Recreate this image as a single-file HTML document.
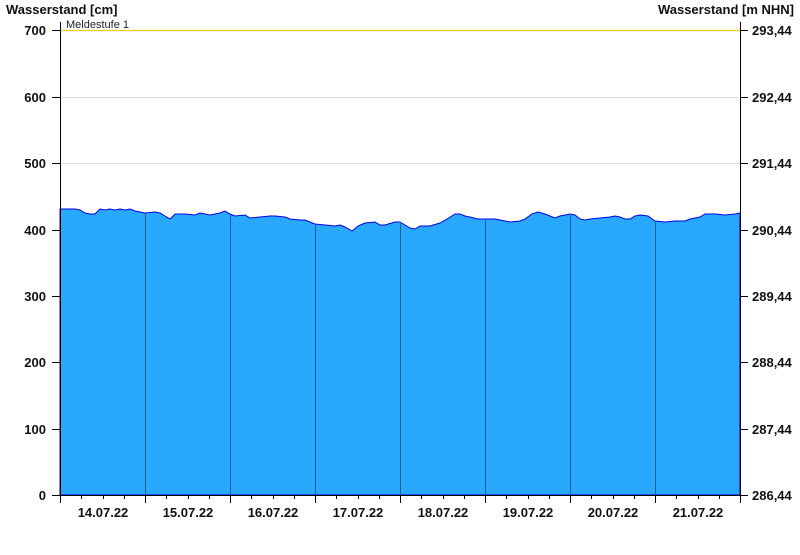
<!DOCTYPE html>
<html><head><meta charset="utf-8"><style>
body{margin:0;background:#fff;width:800px;height:550px;overflow:hidden}
svg text{font-family:"Liberation Sans",Arial,sans-serif}
</style></head><body>
<svg width="800" height="550" xmlns="http://www.w3.org/2000/svg">
<g font-weight="bold" font-size="13" fill="#111">
<text x="6" y="14">Wasserstand [cm]</text>
<text x="794" y="14" text-anchor="end">Wasserstand [m NHN]</text>
</g>
<g stroke="#ddd" stroke-width="1">
<line x1="60" y1="97.5" x2="740" y2="97.5"/>
<line x1="60" y1="163.5" x2="740" y2="163.5"/>
</g>
<line x1="60" y1="30.5" x2="740" y2="30.5" stroke="#f5c518" stroke-width="1.2"/>
<text x="66" y="28" font-size="11" fill="#222">Meldestufe 1</text>
<path fill="#29a8ff" stroke="#0000e0" stroke-width="1" d="M60,209 L75,209 L80,210 L85,213 L90,214 L95,214 L100,209 L105,210 L110,209 L115,210 L120,209 L125,210 L130,209 L135,211 L145,213 L155,212 L160,213 L165,216 L170,219 L175,214 L185,214 L195,215 L200,213 L210,215 L215,214 L220,213 L225,211 L230,214 L235,216 L245,215 L250,218 L260,217 L270,216 L275,216 L285,217 L290,219 L300,220 L305,220 L315,224 L325,225 L335,226 L340,225 L345,227 L352,231 L358,226 L365,223 L375,222 L380,225 L385,225 L395,222 L400,222 L405,225 L410,228 L415,229 L420,226 L430,226 L440,223 L447,219 L455,214 L460,214 L465,216 L470,217 L478,219 L485,219 L495,219 L500,220 L510,222 L520,221 L525,219 L532,214 L538,212 L545,214 L550,216 L555,218 L560,216 L570,214 L575,215 L580,219 L585,220 L590,219 L600,218 L610,217 L615,216 L620,217 L625,219 L630,219 L635,216 L640,215 L648,216 L655,221 L665,222 L675,221 L685,221 L690,219 L700,217 L705,214 L715,214 L725,215 L735,214 L740,213 L740,495 L60,495 Z"/>
<g stroke="#1f5f8f" stroke-width="1">
<line x1="145.5" y1="213" x2="145.5" y2="495"/><line x1="230.5" y1="215" x2="230.5" y2="495"/><line x1="315.5" y1="224" x2="315.5" y2="495"/><line x1="400.5" y1="222" x2="400.5" y2="495"/><line x1="485.5" y1="219" x2="485.5" y2="495"/><line x1="570.5" y1="214" x2="570.5" y2="495"/><line x1="655.5" y1="221" x2="655.5" y2="495"/>
</g>
<g stroke="#000" stroke-width="1">
<line x1="60.5" y1="22" x2="60.5" y2="503"/>
<line x1="740.5" y1="22" x2="740.5" y2="503"/>
<line x1="52" y1="495.5" x2="748" y2="495.5"/>
<line x1="52" y1="30.5" x2="60" y2="30.5"/><line x1="52" y1="97.5" x2="60" y2="97.5"/><line x1="52" y1="163.5" x2="60" y2="163.5"/><line x1="52" y1="230.5" x2="60" y2="230.5"/><line x1="52" y1="296.5" x2="60" y2="296.5"/><line x1="52" y1="362.5" x2="60" y2="362.5"/><line x1="52" y1="429.5" x2="60" y2="429.5"/>
<line x1="740" y1="30.5" x2="748" y2="30.5"/><line x1="740" y1="97.5" x2="748" y2="97.5"/><line x1="740" y1="163.5" x2="748" y2="163.5"/><line x1="740" y1="230.5" x2="748" y2="230.5"/><line x1="740" y1="296.5" x2="748" y2="296.5"/><line x1="740" y1="362.5" x2="748" y2="362.5"/><line x1="740" y1="429.5" x2="748" y2="429.5"/>
<path d="M145.5,495V503M230.5,495V503M315.5,495V503M400.5,495V503M485.5,495V503M570.5,495V503M655.5,495V503"/>
<path d="M81.5,495V499M103.5,495V499M124.5,495V499M166.5,495V499M188.5,495V499M209.5,495V499M251.5,495V499M273.5,495V499M294.5,495V499M336.5,495V499M358.5,495V499M379.5,495V499M421.5,495V499M443.5,495V499M464.5,495V499M506.5,495V499M528.5,495V499M549.5,495V499M591.5,495V499M613.5,495V499M634.5,495V499M676.5,495V499M698.5,495V499M719.5,495V499"/>
</g>
<g font-weight="bold" font-size="13" fill="#111" text-anchor="end">
<text x="46" y="35">700</text><text x="46" y="102">600</text><text x="46" y="168">500</text><text x="46" y="235">400</text><text x="46" y="301">300</text><text x="46" y="367">200</text><text x="46" y="434">100</text><text x="46" y="500">0</text>
</g>
<g font-weight="bold" font-size="13" fill="#111">
<text x="752" y="35">293,44</text><text x="752" y="102">292,44</text><text x="752" y="168">291,44</text><text x="752" y="235">290,44</text><text x="752" y="301">289,44</text><text x="752" y="367">288,44</text><text x="752" y="434">287,44</text><text x="752" y="500">286,44</text>
</g>
<g font-weight="bold" font-size="13" fill="#111" text-anchor="middle">
<text x="103" y="517">14.07.22</text><text x="188" y="517">15.07.22</text><text x="273" y="517">16.07.22</text><text x="358" y="517">17.07.22</text><text x="443" y="517">18.07.22</text><text x="528" y="517">19.07.22</text><text x="613" y="517">20.07.22</text><text x="698" y="517">21.07.22</text>
</g>
</svg>
</body></html>
